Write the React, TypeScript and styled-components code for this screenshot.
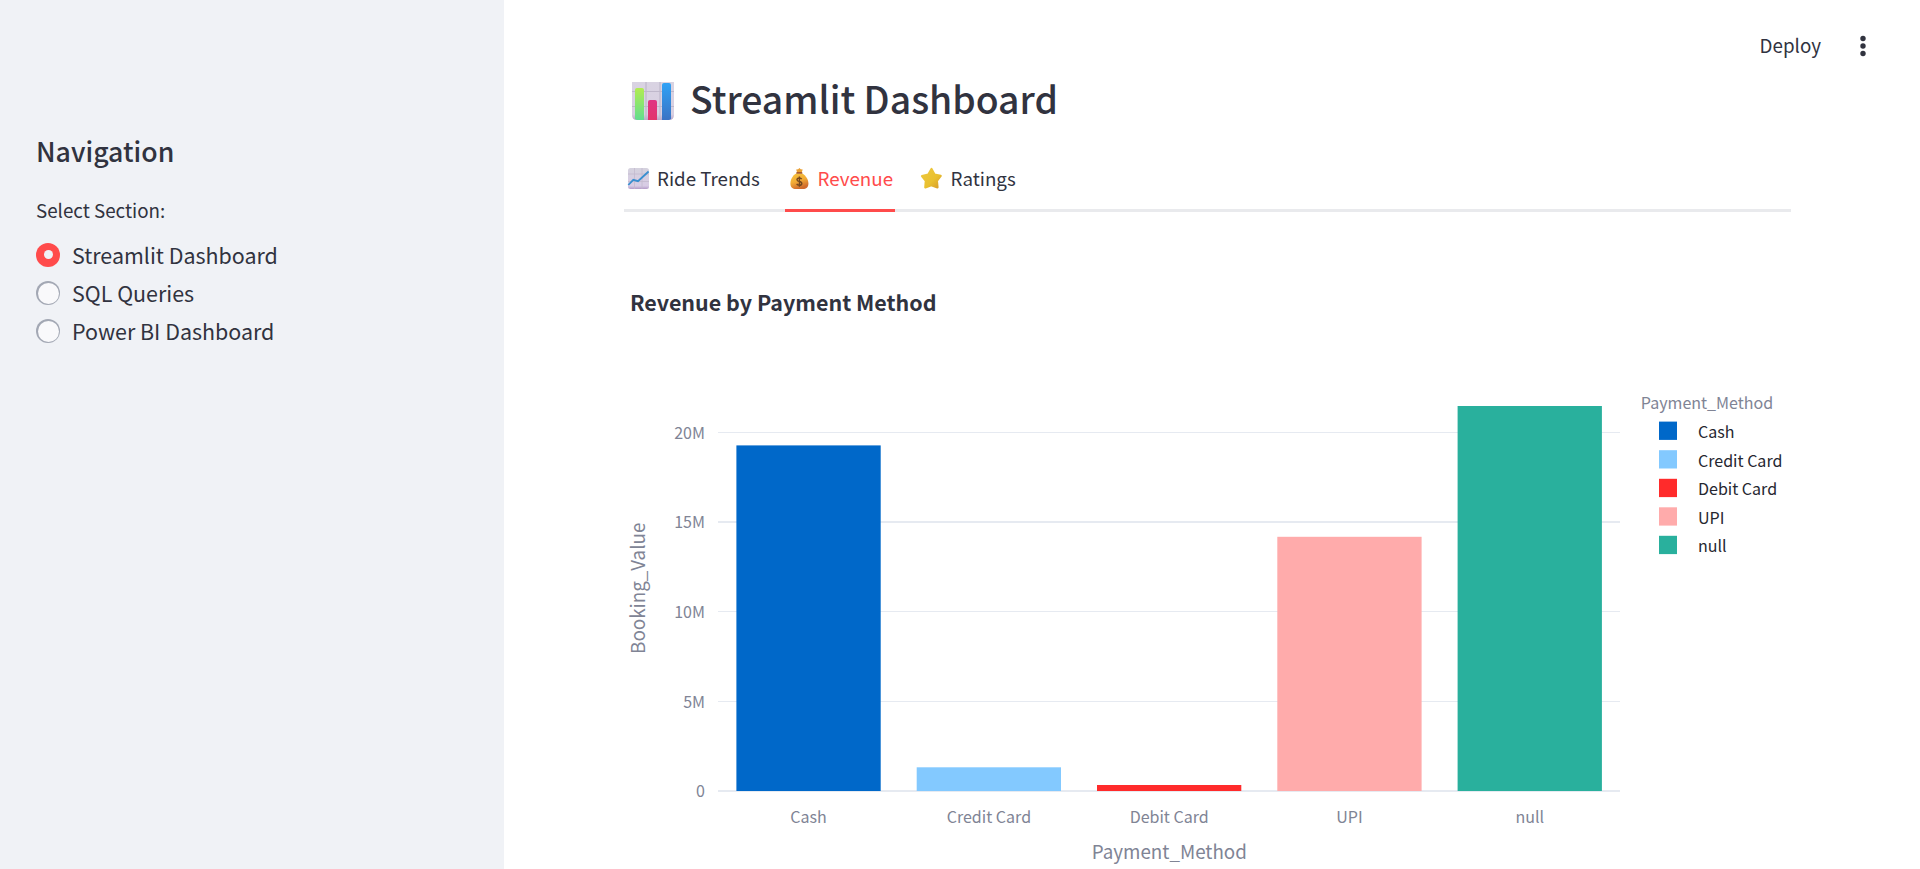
import React from "react";
import styled, { createGlobalStyle } from "styled-components";

const FONT = '"Noto Sans CJK SC", "Noto Sans", sans-serif';

const GlobalStyle = createGlobalStyle`
  *, *::before, *::after { box-sizing: border-box; }
  body { margin: 0; background: #fff; color: #31333f; font-family: ${FONT}; }
`;

const Page = styled.div`
  display: flex;
  height: 869px;
  overflow: hidden;
`;

const Sidebar = styled.aside`
  flex: none;
  width: 504px;
  padding: 133.4px 36px 0;
  background: #f0f2f6;
`;

const SidebarTitle = styled.h2`
  margin: 0 0 25px;
  font-size: 26.7px;
  font-weight: 500;
  line-height: 36px;
`;

const GroupLabel = styled.div`
  margin-bottom: 9.4px;
  font-size: 18.8px;
  line-height: 32px;
`;

const RadioRow = styled.label`
  display: flex;
  align-items: center;
  gap: 12px;
  height: 38.2px;
  font-size: 21.45px;
  line-height: 38px;
`;

const RadioMark = styled.span<{ $checked: boolean }>`
  display: flex;
  align-items: center;
  justify-content: center;
  width: 24px;
  height: 24px;
  border-radius: 50%;
  background: ${(p) => (p.$checked ? "#ff4b4b" : "#a3a8b4")};

  &::after {
    content: "";
    width: ${(p) => (p.$checked ? 9 : 21)}px;
    height: ${(p) => (p.$checked ? 9 : 21)}px;
    border-radius: 50%;
    background: ${(p) => (p.$checked ? "#f0f2f6" : "#f9f9fb")};
  }
`;

const Main = styled.main`
  flex: 1;
  min-width: 0;
  display: flex;
  flex-direction: column;
`;

const Toolbar = styled.header`
  display: flex;
  justify-content: flex-end;
  align-items: center;
  gap: 33px;
  height: 78px;
  padding: 14px 48px 0 0;
  font-size: 18.8px;
  line-height: 32px;
`;

const DeployButton = styled.span`
  padding-bottom: 2px;
`;

const Content = styled.div`
  display: flex;
  flex-direction: column;
  width: 1167px;
  margin-left: 120px;
`;

const PageTitle = styled.h1`
  display: flex;
  align-items: center;
  gap: 16px;
  height: 46px;
  margin: 0;
  padding-left: 8px;
  font-size: 37.35px;
  font-weight: 500;
  line-height: 40px;
`;

const TitleText = styled.span`
  padding-bottom: 6px;
`;

const TabList = styled.div`
  display: flex;
  gap: 24px;
  height: 61px;
  margin-top: 27px;
  border-bottom: 3px solid #e9eaed;
`;

const Tab = styled.div<{ $active?: boolean; $width: number }>`
  display: flex;
  align-items: center;
  gap: 5px;
  width: ${(p) => p.$width}px;
  height: 61px;
  padding-bottom: 4px;
  border-bottom: 3px solid ${(p) => (p.$active ? "#ff4b4b" : "transparent")};
  color: ${(p) => (p.$active ? "#ff4b4b" : "inherit")};
  font-size: 18.75px;
  line-height: 28px;
  white-space: nowrap;

  svg {
    flex: none;
    margin-top: 2px;
  }
`;

const Chart = styled.svg`
  display: block;
  width: 1200px;
  height: 657px;
  font-family: ${FONT};
`;

const MenuDots = () => (
  <svg width="18" height="24" viewBox="0 0 18 24" fill="#31333f">
    <circle cx="9" cy="4.5" r="2.7" />
    <circle cx="9" cy="12" r="2.7" />
    <circle cx="9" cy="19.5" r="2.7" />
  </svg>
);

const BarsIcon = () => (
  <svg width="42" height="38" viewBox="0 0 42 38">
    <defs>
      <linearGradient id="barGreen" x1="0" y1="0" x2="0" y2="1">
        <stop offset="0" stopColor="#b2ec50" />
        <stop offset="1" stopColor="#62dd90" />
      </linearGradient>
      <linearGradient id="barPink" x1="0" y1="0" x2="0" y2="1">
        <stop offset="0" stopColor="#e03583" />
        <stop offset="1" stopColor="#e2356c" />
      </linearGradient>
      <linearGradient id="barBlue" x1="0" y1="0" x2="0" y2="1">
        <stop offset="0" stopColor="#2fa2f6" />
        <stop offset="1" stopColor="#3a73c4" />
      </linearGradient>
      <linearGradient id="barPanel" x1="0" y1="0" x2="0" y2="1">
        <stop offset="0" stopColor="#d9d3e2" />
        <stop offset="0.85" stopColor="#d8d0e2" />
        <stop offset="1" stopColor="#b9a5c8" />
      </linearGradient>
    </defs>
    <path d="M0 0H42V33Q42 38 37 38H5Q0 38 0 33Z" fill="url(#barPanel)" />
    <path d="M0 9.5H42M0 24.5H42M14 0V38M28 0V38" stroke="#bfb8cb" strokeWidth="1.2" />
    <path d="M3 8Q3 6 5 6H10Q12 6 12 8V38H5L3 37Z" fill="url(#barGreen)" />
    <path d="M16 20Q16 18 18 18H23Q25 18 25 20V38H16Z" fill="url(#barPink)" />
    <path d="M30 3Q30 1 32 1H37Q39 1 39 3V37L37 38H30Z" fill="url(#barBlue)" />
  </svg>
);

const TrendIcon = () => (
  <svg width="28" height="24" viewBox="0 0 28 24">
    <defs>
      <linearGradient id="trendPanel" x1="0" y1="0" x2="0" y2="1">
        <stop offset="0" stopColor="#d5d2de" />
        <stop offset="0.85" stopColor="#d8cce5" />
        <stop offset="1" stopColor="#b49bc9" />
      </linearGradient>
    </defs>
    <rect x="4" y="1" width="21" height="21" rx="2.5" fill="url(#trendPanel)" />
    <path d="M4 7H25M4 14.5H25M10.5 1V22M18 1V22" stroke="#c3bace" strokeWidth="0.8" />
    <path d="M4.3 18L9.3 12.8L14 14.2L24.6 4.5" fill="none" stroke="#398fd0" strokeWidth="1.8" />
  </svg>
);

const MoneyIcon = () => (
  <svg width="28" height="24" viewBox="0 0 28 24">
    <defs>
      <linearGradient id="bagFill" x1="0" y1="0" x2="0.4" y2="1">
        <stop offset="0" stopColor="#f6c53d" />
        <stop offset="0.55" stopColor="#f2ac36" />
        <stop offset="1" stopColor="#d06b2d" />
      </linearGradient>
    </defs>
    <path
      d="M11.2 6.5C7.700 8.500 5.400 12.500 5.400 16.500C5.400 20.500 7.700 22 10.700 22H17.900C21.200 22 23.400 20.300 23.400 16.500C23.400 12.500 20.700 8.500 17.200 6.500Z"
      fill="url(#bagFill)"
    />
    <path d="M11.200 2.500L13.200 2.300L14.400 1L15.700 2.300L17.700 2.500L16.700 5.600H12.100Z" fill="#eaa033" />
    <rect x="11.200" y="5" width="6.200" height="1.800" rx="0.900" fill="#a85b2c" />
    <path
      d="M16.700 12.200Q16 11 14.300 11Q12 11.100 12 12.800Q12 14.200 14.300 14.500Q16.800 14.900 16.800 16.600Q16.700 18.300 14.300 18.300Q12.400 18.300 11.700 16.900M14.400 9.500V19.800"
      fill="none"
      stroke="#75481f"
      strokeWidth="1.400"
    />
  </svg>
);

const StarIcon = () => (
  <svg width="27" height="24" viewBox="0.7 0 27 24">
    <defs>
      <linearGradient id="starFill" x1="0" y1="0" x2="1" y2="1">
        <stop offset="0" stopColor="#edc83f" />
        <stop offset="0.6" stopColor="#e9c02f" />
        <stop offset="1" stopColor="#d79b2b" />
      </linearGradient>
    </defs>
    <path
      d="M13.200 2L16.200 7.500L22.400 8.900L18.600 13.800L19.200 20.400L13 18.300L7 20.400L7.500 13.800L3.700 9L10 7.500Z"
      fill="url(#starFill)"
      stroke="url(#starFill)"
      strokeWidth="2.200"
      strokeLinejoin="round"
    />
  </svg>
);

const BASE_Y = 791;

const bars = [
  { label: "Cash", x: 736.4, top: 445.4, color: "#0068c9", swatchY: 421.6, textY: 438 },
  { label: "Credit Card", x: 916.7, top: 767.3, color: "#83c9ff", swatchY: 450.2, textY: 467 },
  { label: "Debit Card", x: 1097, top: 785, color: "#ff2b2b", swatchY: 478.8, textY: 495 },
  { label: "UPI", x: 1277.3, top: 536.8, color: "#ffabab", swatchY: 507.3, textY: 524 },
  { label: "null", x: 1457.6, top: 406, color: "#29b09d", swatchY: 535.8, textY: 552 },
];

const ticks = [
  { label: "20M", y: 432.5, textY: 439, width: 1 },
  { label: "15M", y: 522, textY: 528, width: 2 },
  { label: "10M", y: 611.5, textY: 618, width: 1 },
  { label: "5M", y: 701.5, textY: 708, width: 1 },
  { label: "0", y: 791, textY: 797, width: 2 },
];

const RevenueChart = () => (
  <Chart viewBox="624 212 1200 657">
    <text x="630" y="311" fontSize="21.45" fontWeight="700" fill="#31333f">
      Revenue by Payment Method
    </text>
    {ticks.map((t) => (
      <React.Fragment key={t.label}>
        <line x1="718" x2="1620" y1={t.y} y2={t.y} stroke="#e6eaf1" strokeWidth={t.width} />
        <text x="705" y={t.textY} fontSize="16" fill="#808495" textAnchor="end">
          {t.label}
        </text>
      </React.Fragment>
    ))}
    {bars.map((b) => (
      <React.Fragment key={b.label}>
        <rect x={b.x} y={b.top} width="144.3" height={BASE_Y - b.top} fill={b.color} />
        <text x={b.x + 72.2} y="823" fontSize="16.05" fill="#808495" textAnchor="middle">
          {b.label}
        </text>
      </React.Fragment>
    ))}
    <text x="1169.300" y="859" fontSize="18.8" fill="#808495" textAnchor="middle">
      Payment_Method
    </text>
    <text transform="translate(645 588.300) rotate(-90)" fontSize="18.8" fill="#808495" textAnchor="middle">
      Booking_Value
    </text>
    <text x="1640.8" y="409" fontSize="16.05" fill="#808495">
      Payment_Method
    </text>
    {bars.map((b) => (
      <React.Fragment key={b.label}>
        <rect x="1659" y={b.swatchY} width="18" height="18.300" fill={b.color} />
        <text x="1698" y={b.textY} fontSize="16.05" fill="#262730">
          {b.label}
        </text>
      </React.Fragment>
    ))}
  </Chart>
);

const sections = ["Streamlit Dashboard", "SQL Queries", "Power BI Dashboard"];

export default function App() {
  return (
    <Page>
      <GlobalStyle />
      <Sidebar>
        <SidebarTitle>Navigation</SidebarTitle>
        <GroupLabel>Select Section:</GroupLabel>
        {sections.map((name, i) => (
          <RadioRow key={name}>
            <RadioMark $checked={i === 0} />
            {name}
          </RadioRow>
        ))}
      </Sidebar>
      <Main>
        <Toolbar>
          <DeployButton>Deploy</DeployButton>
          <MenuDots />
        </Toolbar>
        <Content>
          <PageTitle>
            <BarsIcon />
            <TitleText>Streamlit Dashboard</TitleText>
          </PageTitle>
          <TabList>
            <Tab $width={136.6}>
              <TrendIcon />
              Ride Trends
            </Tab>
            <Tab $active $width={110}>
              <MoneyIcon />
              Revenue
            </Tab>
            <Tab $width={98}>
              <StarIcon />
              Ratings
            </Tab>
          </TabList>
          <RevenueChart />
        </Content>
      </Main>
    </Page>
  );
}
